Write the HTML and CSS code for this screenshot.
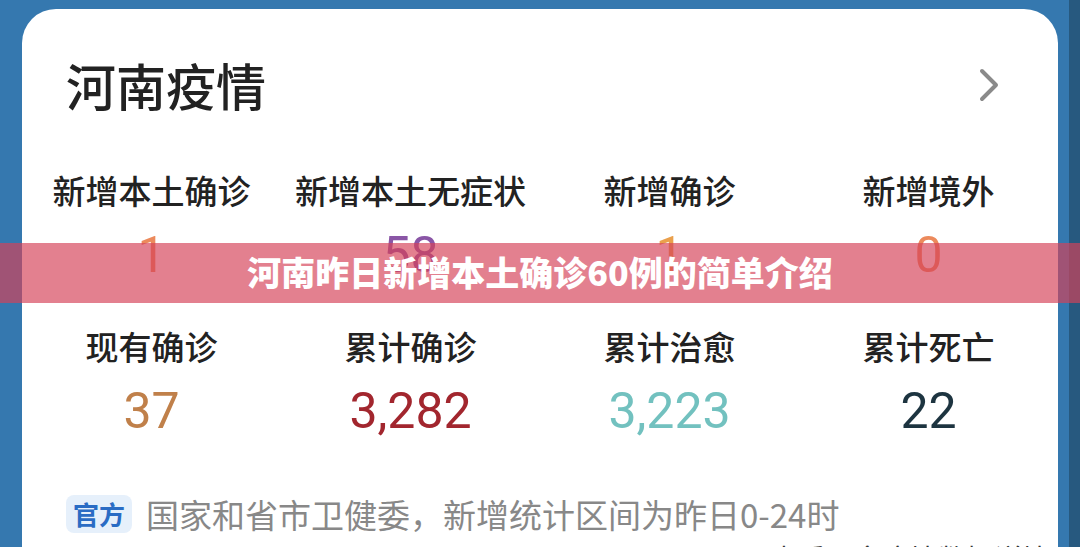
FILE: index.html
```html
<!DOCTYPE html>
<html>
<head>
	<meta charset="utf-8">
	<title>河南昨日新增本土确诊60例的简单介绍</title>
<link rel="stylesheet" href="styles.css">
</head>
<body>

<div class="page">
	<div class="main">
		<div class="card">
			<div class="card-head">
				<h1 class="title">河南疫情</h1>
				<svg class="more" width="26" height="36" viewBox="0 0 26 36">
					<path d="M6 4 L20 18 L6 32" fill="none" stroke="#8a8a8a" stroke-width="4" stroke-linecap="round" stroke-linejoin="round"/>
				</svg>
			</div>

			<div class="stats">
				<div class="stat">
					<div class="label">新增本土确诊</div>
					<div class="num c-orange">1</div>
				</div>
				<div class="stat">
					<div class="label">新增本土无症状</div>
					<div class="num c-purple">58</div>
				</div>
				<div class="stat">
					<div class="label">新增确诊</div>
					<div class="num c-yellow">1</div>
				</div>
				<div class="stat">
					<div class="label">新增境外</div>
					<div class="num c-orange">0</div>
				</div>

				<div class="stat">
					<div class="label">现有确诊</div>
					<div class="num c-brown">37</div>
				</div>
				<div class="stat">
					<div class="label">累计确诊</div>
					<div class="num c-red">3,282</div>
				</div>
				<div class="stat">
					<div class="label">累计治愈</div>
					<div class="num c-teal">3,223</div>
				</div>
				<div class="stat">
					<div class="label">累计死亡</div>
					<div class="num c-dark">22</div>
				</div>
			</div>

			<div class="source">
				<span class="tag">官方</span>
				<span class="source-text">国家和省市卫健委，新增统计区间为昨日0-24时</span>
			</div>
			<div class="more-line">查看更多疫情数据详情</div>
		</div>
	</div>
	<div class="edge"></div>
</div>

<div class="banner">河南昨日新增本土确诊60例的简单介绍</div>

</body>
</html>
```

FILE: styles.css
```css
*{box-sizing: border-box;margin: 0;padding: 0;}

body{width: 1080px;height: 547px;overflow: hidden;background: #3578af;font-family: "Noto Sans CJK SC", "Noto Sans", sans-serif;position: relative;}

.page{display: flex;height: 100%;}
.main{flex: 1;padding: 9px 11px 0 22px;}
.edge{width: 11px;background: #27597f;}

.card{background: #fff;border-radius: 34px 34px 0 0;height: 100%;overflow: hidden;}

.card-head{display: flex;justify-content: space-between;align-items: center;padding: 46px 56px 0 44px;}
.title{font-size: 50px;font-weight: 500;line-height: 58px;color: #222;}
.more{display: block;margin-top: 2px;}

.stats{display: grid;grid-template-columns: repeat(4, 1fr);row-gap: 41px;margin-top: 55px;text-align: center;}
.stat{display: flex;flex-direction: column;gap: 15px;}
.label{font-size: 33px;font-weight: 500;line-height: 44px;color: #222;}
.num{font-family: Roboto, "Noto Sans", sans-serif;font-size: 50px;line-height: 56px;}

.c-orange{color: #ec8a5c;}
.c-purple{color: #8a56a6;}
.c-yellow{color: #eaa04c;}
.c-brown{color: #c0804a;}
.c-red{color: #a2262e;}
.c-teal{color: #72c1bf;}
.c-dark{color: #1d3440;}

.source{display: flex;align-items: center;gap: 14px;margin-top: 55px;padding-left: 44px;height: 40px;}
.tag{background: #e6f0fb;color: #2a6cc4;font-size: 26px;font-weight: 700;line-height: 38px;padding: 0 7px;border-radius: 8px;}
.source-text{font-size: 33px;color: #888;line-height: 40px;}

.more-line{text-align: right;padding-right: 8px;margin-top: 6px;font-size: 28px;line-height: 36px;color: #333;}

.banner{position: absolute;left: 0;right: 0;top: 243px;height: 60px;background: rgba(213, 66, 88, 0.67);color: #fff;font-size: 34px;font-weight: 900;line-height: 58px;text-align: center;}
```
